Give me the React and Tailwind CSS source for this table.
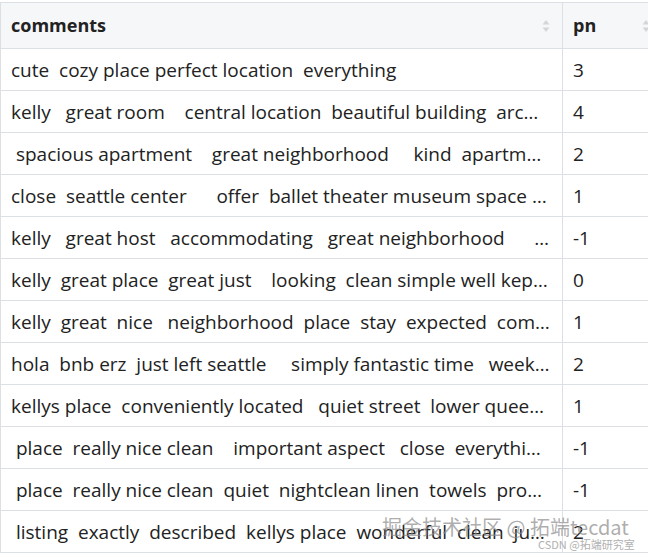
const ROWS = [
  ['cute  cozy place perfect location  everything', '3'],
  ['kelly   great room    central location  beautiful building  architecture  great', '4'],
  [' spacious apartment    great neighborhood     kind  apartment owner  clean', '2'],
  ['close  seattle center      offer  ballet theater museum space needle  great', '1'],
  ['kelly   great host   accommodating   great neighborhood      great  stay', '-1'],
  ['kelly  great place  great just    looking  clean simple well kept place', '0'],
  ['kelly  great  nice   neighborhood  place  stay  expected  comfortable', '1'],
  ['hola  bnb erz  just left seattle     simply fantastic time   weekend  great', '2'],
  ['kellys place  conveniently located   quiet street  lower queen anne  great', '1'],
  [' place  really nice clean    important aspect   close  everything  great', '-1'],
  [' place  really nice clean  quiet  nightclean linen  towels  provided', '-1'],
  [' listing  exactly  described  kellys place  wonderful  clean  just  great', '2'],
]

function SortIcon() {
  return (
    <svg width="8" height="14" viewBox="0 0 8 14" className="shrink-0">
      <path d="M4 1 L7.5 5.5 L0.5 5.5 Z" fill="#d4d6da" />
      <path d="M4 13 L7.5 8.5 L0.5 8.5 Z" fill="#d4d6da" />
    </svg>
  )
}

export default function App() {
  return (
    <div
      className="relative w-[648px] h-[555px] overflow-hidden bg-white pt-[2px]"
      style={{ fontFamily: '"Open Sans", "Noto Sans", sans-serif' }}
    >
      <table className="table-fixed border-collapse w-[662px] text-[#222]">
        <colgroup>
          <col className="w-[562px]" />
          <col className="w-[100px]" />
        </colgroup>
        <thead>
          <tr className="bg-[#f6f7f9] h-[46px]">
            <th className="border border-[#dcdfe3] text-left font-bold text-[18px] pl-[10px] pr-[12px] align-middle">
              <div className="flex items-center justify-between">
                <span>comments</span>
                <SortIcon />
              </div>
            </th>
            <th className="border border-[#dcdfe3] text-left font-bold text-[18px] pl-[10px] pr-[12px] align-middle">
              <div className="flex items-center justify-between">
                <span>pn</span>
                <SortIcon />
              </div>
            </th>
          </tr>
        </thead>
        <tbody>
          {ROWS.map(([text, pn], i) => (
            <tr key={i} className="h-[42px]">
              <td className="border border-[#dcdfe3] pl-[10px] pr-[12px] text-[19px] align-middle">
                <div className="truncate whitespace-pre leading-[24px]">{text}</div>
              </td>
              <td className="border border-[#dcdfe3] px-[10px] text-[19px] align-middle leading-[24px]">{pn}</td>
            </tr>
          ))}
        </tbody>
      </table>

      {/* watermark */}
      <div className="absolute left-[382px] top-[512px] text-[20px] text-[#8a8a8a]/70 whitespace-nowrap" style={{ fontFamily: '"Noto Sans CJK SC", "Noto Sans", sans-serif' }}>
        掘金技术社区 @ 拓端tecdat
      </div>
      <div className="absolute left-[538px] top-[536px] text-[11px] text-[#b0b0b0] whitespace-nowrap" style={{ fontFamily: '"Noto Sans CJK SC", "Noto Sans", sans-serif' }}>
        CSDN @拓端研究室
      </div>
    </div>
  )
}
